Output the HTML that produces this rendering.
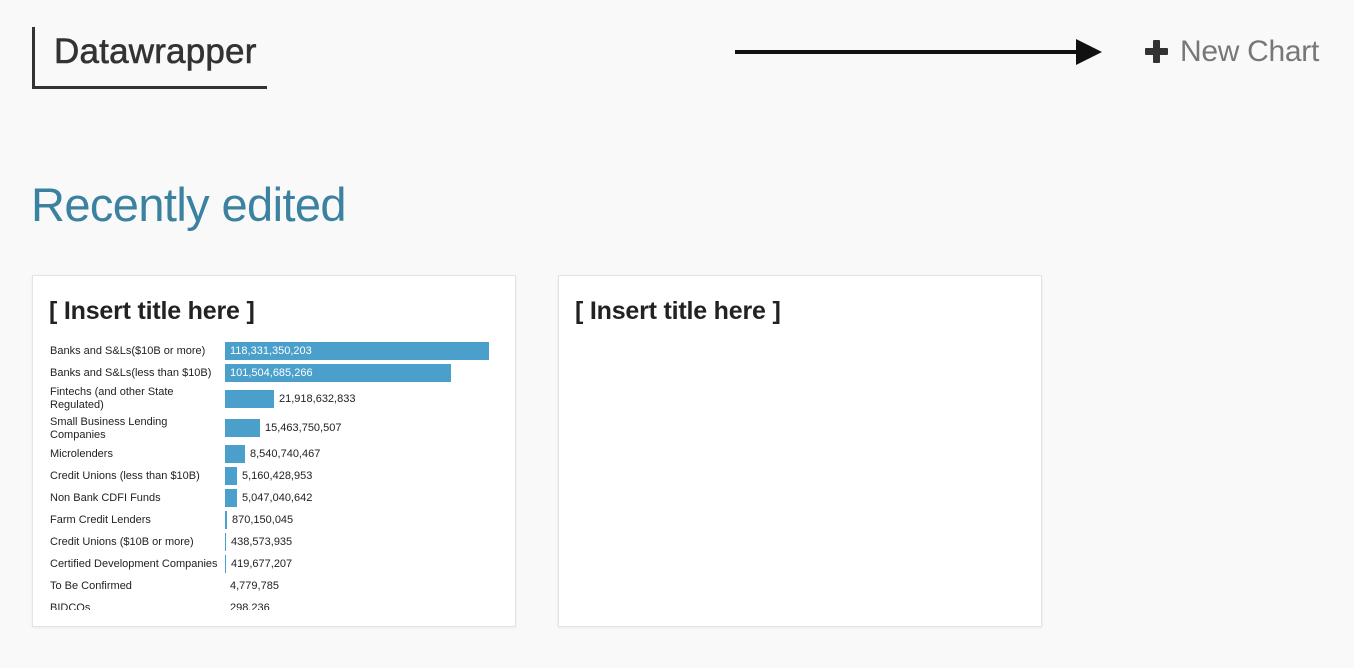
<!DOCTYPE html>
<html><head><meta charset="utf-8"><style>
body{margin:0;width:1354px;height:668px;background:#f9f9f9;font-family:"Liberation Sans",Arial,sans-serif;position:relative;overflow:hidden}
.abs{position:absolute}
.card{position:absolute;top:275px;width:482px;height:350px;background:#fff;border:1px solid #e3e3e3;box-shadow:0 1px 3px rgba(0,0,0,.06);overflow:hidden}
.card h2{position:absolute;left:16px;top:21px;margin:0;font-size:25px;font-weight:bold;color:#222;letter-spacing:-0.2px}
.lab{position:absolute;left:17px;font-size:11px;color:#222;line-height:13px;width:170px}
.bar{position:absolute;left:192px;height:18px;background:#4a9fcb}
.val{position:absolute;font-size:11px;color:#222;line-height:13px}
</style></head><body>
<div class="abs" style="left:32px;top:27px;width:3px;height:62px;background:#333"></div>
<div class="abs" style="left:32px;top:86px;width:235px;height:3px;background:#333"></div>
<div class="abs" style="left:54px;top:32px;font-size:35px;color:#333;letter-spacing:0.2px;-webkit-text-stroke:0.6px #333">Datawrapper</div>
<div class="abs" style="left:735px;top:50px;width:345px;height:4px;background:#111"></div>
<svg class="abs" style="left:1076px;top:39px" width="26" height="26"><polygon points="0,0 26,13 0,26" fill="#111"/></svg>
<svg class="abs" style="left:1145px;top:40px" width="23" height="23"><rect x="8" y="0" width="7" height="23" rx="1" fill="#333"/><rect x="0" y="8" width="23" height="7" rx="1" fill="#333"/></svg>
<div class="abs" style="left:1180px;top:35px;font-size:30px;color:#777;letter-spacing:-0.3px">New Chart</div>
<div class="abs" style="left:31px;top:177px;font-size:47px;color:#3a82a0;letter-spacing:-0.6px">Recently edited</div>

<div class="card" style="left:32px">
<h2>[ Insert title here ]</h2>
<div class="lab" style="top:69px">Banks and S&amp;Ls($10B or more)</div>
<div class="bar" style="top:66px;width:264px"></div><div class="val" style="left:197px;top:69px;color:#fff">118,331,350,203</div>
<div class="lab" style="top:91px">Banks and S&amp;Ls(less than $10B)</div>
<div class="bar" style="top:88px;width:226px"></div><div class="val" style="left:197px;top:91px;color:#fff">101,504,685,266</div>
<div class="lab" style="top:110px">Fintechs (and other State Regulated)</div>
<div class="bar" style="top:114px;width:49px"></div><div class="val" style="left:246px;top:117px">21,918,632,833</div>
<div class="lab" style="top:140px">Small Business Lending Companies</div>
<div class="bar" style="top:143px;width:35px"></div><div class="val" style="left:232px;top:146px">15,463,750,507</div>
<div class="lab" style="top:172px">Microlenders</div>
<div class="bar" style="top:169px;width:20px"></div><div class="val" style="left:217px;top:172px">8,540,740,467</div>
<div class="lab" style="top:194px">Credit Unions (less than $10B)</div>
<div class="bar" style="top:191px;width:12px"></div><div class="val" style="left:209px;top:194px">5,160,428,953</div>
<div class="lab" style="top:216px">Non Bank CDFI Funds</div>
<div class="bar" style="top:213px;width:12px"></div><div class="val" style="left:209px;top:216px">5,047,040,642</div>
<div class="lab" style="top:238px">Farm Credit Lenders</div>
<div class="bar" style="top:235px;width:2px"></div><div class="val" style="left:199px;top:238px">870,150,045</div>
<div class="lab" style="top:260px">Credit Unions ($10B or more)</div>
<div class="bar" style="top:257px;width:1px"></div><div class="val" style="left:198px;top:260px">438,573,935</div>
<div class="lab" style="top:282px">Certified Development Companies</div>
<div class="bar" style="top:279px;width:1px"></div><div class="val" style="left:198px;top:282px">419,677,207</div>
<div class="lab" style="top:304px">To Be Confirmed</div>
<div class="val" style="left:197px;top:304px">4,779,785</div>
<div class="abs" style="left:0;top:326px;width:482px;height:8px;overflow:hidden">
<div class="lab" style="top:0">BIDCOs</div><div class="val" style="left:197px;top:0">298,236</div></div>
</div>
<div class="card" style="left:558px"><h2>[ Insert title here ]</h2></div>
</body></html>
